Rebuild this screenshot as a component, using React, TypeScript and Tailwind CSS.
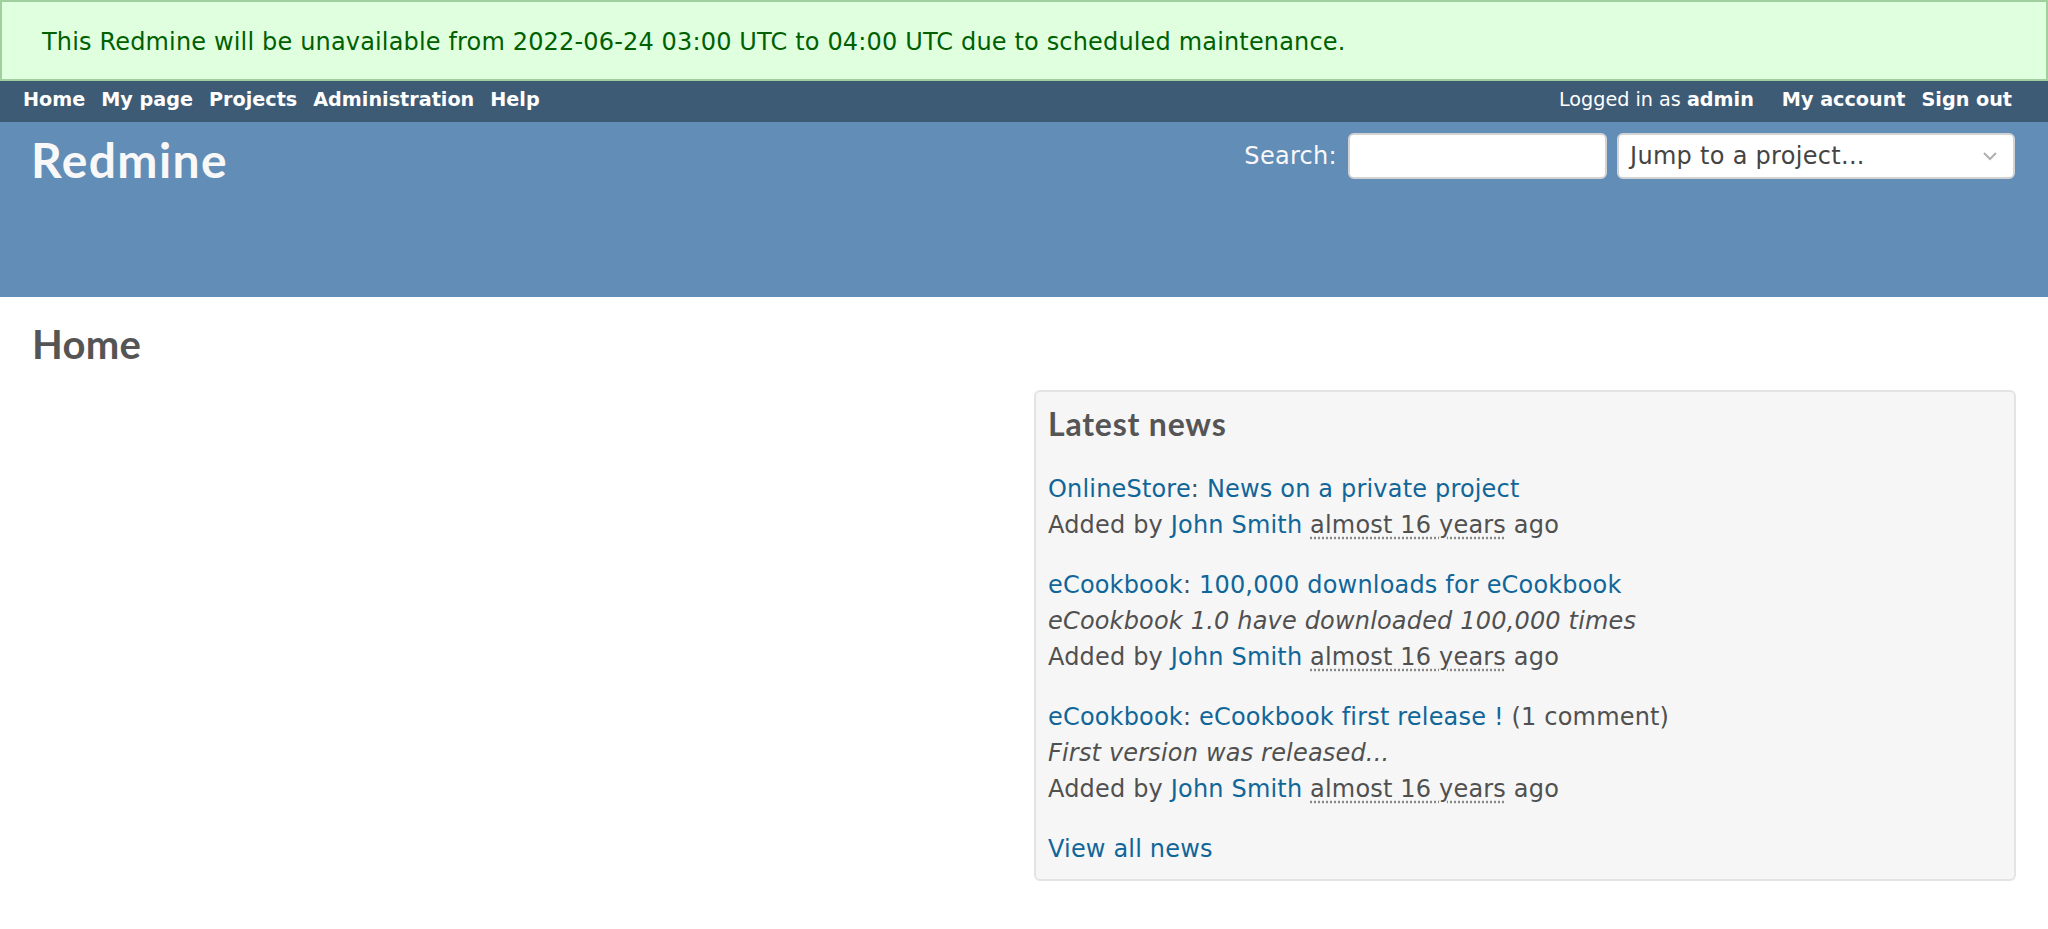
import React from 'react';

const body = "font-['DejaVu_Sans','Liberation_Sans',sans-serif]";
const heading = "font-['Lato','Open_Sans',sans-serif]";

type NewsItem = {
  project: string;
  title: string;
  summary?: string;
  comments?: string;
};

const news: NewsItem[] = [
  { project: 'OnlineStore', title: 'News on a private project' },
  { project: 'eCookbook', title: '100,000 downloads for eCookbook', summary: 'eCookbook 1.0 have downloaded 100,000 times' },
  { project: 'eCookbook', title: 'eCookbook first release !', summary: 'First version was released...', comments: '(1 comment)' },
];

const ChevronDown = () => (
  <svg width="16" height="10" viewBox="0 0 16 10" className="shrink-0">
    <path d="M2 2 L8 8 L14 2" fill="none" stroke="#b0b0b0" strokeWidth="2" />
  </svg>
);

const TopMenu = () => (
  <div className="flex justify-between h-[41px] bg-[#3e5b76] text-white text-[19.2px] leading-[24px] pt-[7px] pl-[23px] pr-[20px]">
    <ul className="flex">
      {['Home', 'My page', 'Projects', 'Administration', 'Help'].map((item) => (
        <li key={item} className="mr-[16px] font-bold whitespace-nowrap">
          <a>{item}</a>
        </li>
      ))}
    </ul>
    <div className="flex">
      <div className="mr-[28px] whitespace-nowrap">
        Logged in as <span className="font-bold">admin</span>
      </div>
      <ul className="flex">
        <li className="mr-[16px] font-bold whitespace-nowrap">My account</li>
        <li className="mr-[16px] font-bold whitespace-nowrap">Sign out</li>
      </ul>
    </div>
  </div>
);

const Header = () => (
  <div className="flex justify-between h-[175px] bg-[#628db6] text-[#f8f8f8] pl-[31px] pr-[33px]">
    <h1 className={`${heading} mt-[9px] text-[48px] leading-[58px] font-bold tracking-[1.4px]`}>Redmine</h1>
    <div className="flex items-center mt-[11px] h-[46px] text-[24px] tracking-[0.3px]">
      <label className="mr-[11px] leading-[36px]">Search:</label>
      <div className="w-[259px] h-[46px] bg-white border-2 border-[#d3d3d3] rounded-[6px] mr-[10px]" />
      <div className="flex items-center justify-between w-[398px] h-[46px] bg-white border-2 border-[#d3d3d3] rounded-[6px] pl-[11px] pr-[15px] text-[#444]">
        <span className="leading-[36px]">Jump to a project...</span>
        <ChevronDown />
      </div>
    </div>
  </div>
);

const Added = () => (
  <div>
    Added by <a className="text-[#169]">John Smith</a>{' '}
    <span className="underline decoration-dotted decoration-[#888] underline-offset-[4px]">almost 16 years</span> ago
  </div>
);

const LatestNews = () => (
  <div className="ml-auto w-[982px] mt-[22px] bg-[#f6f6f6] border-2 border-[#e4e4e4] rounded-[6px] p-[12px] text-[#505050] text-[24px] leading-[36px] tracking-[0.18px]">
    <h3 className={`${heading} text-[32px] leading-[40px] font-bold text-[#555] tracking-[0.8px]`}>Latest news</h3>
    <div className="mt-[27px] flex flex-col gap-[24px]">
      {news.map((n, i) => (
        <div key={i}>
          <div>
            <a className="text-[#169]">{n.project}</a>: <a className="text-[#169]">{n.title}</a>
            {n.comments && <span> {n.comments}</span>}
          </div>
          {n.summary && <div className="italic">{n.summary}</div>}
          <Added />
        </div>
      ))}
      <div>
        <a className="text-[#169]">View all news</a>
      </div>
    </div>
  </div>
);

export default function App() {
  return (
    <div className={`${body} min-h-screen bg-white text-[#333]`}>
      <div className="h-[81px] bg-[#dfffdf] border-2 border-[#9fcf9f] text-[#005f00] text-[24px] leading-[36px] pt-[22px] pl-[40px] tracking-[0.16px]">
        This Redmine will be unavailable from 2022-06-24 03:00 UTC to 04:00 UTC due to scheduled maintenance.
      </div>
      <TopMenu />
      <Header />
      <div className="px-[32px] pt-[23px] pb-[20px]">
        <h2 className={`${heading} text-[40px] leading-[48px] font-bold text-[#555] tracking-[0.3px]`}>Home</h2>
        <LatestNews />
      </div>
    </div>
  );
}
